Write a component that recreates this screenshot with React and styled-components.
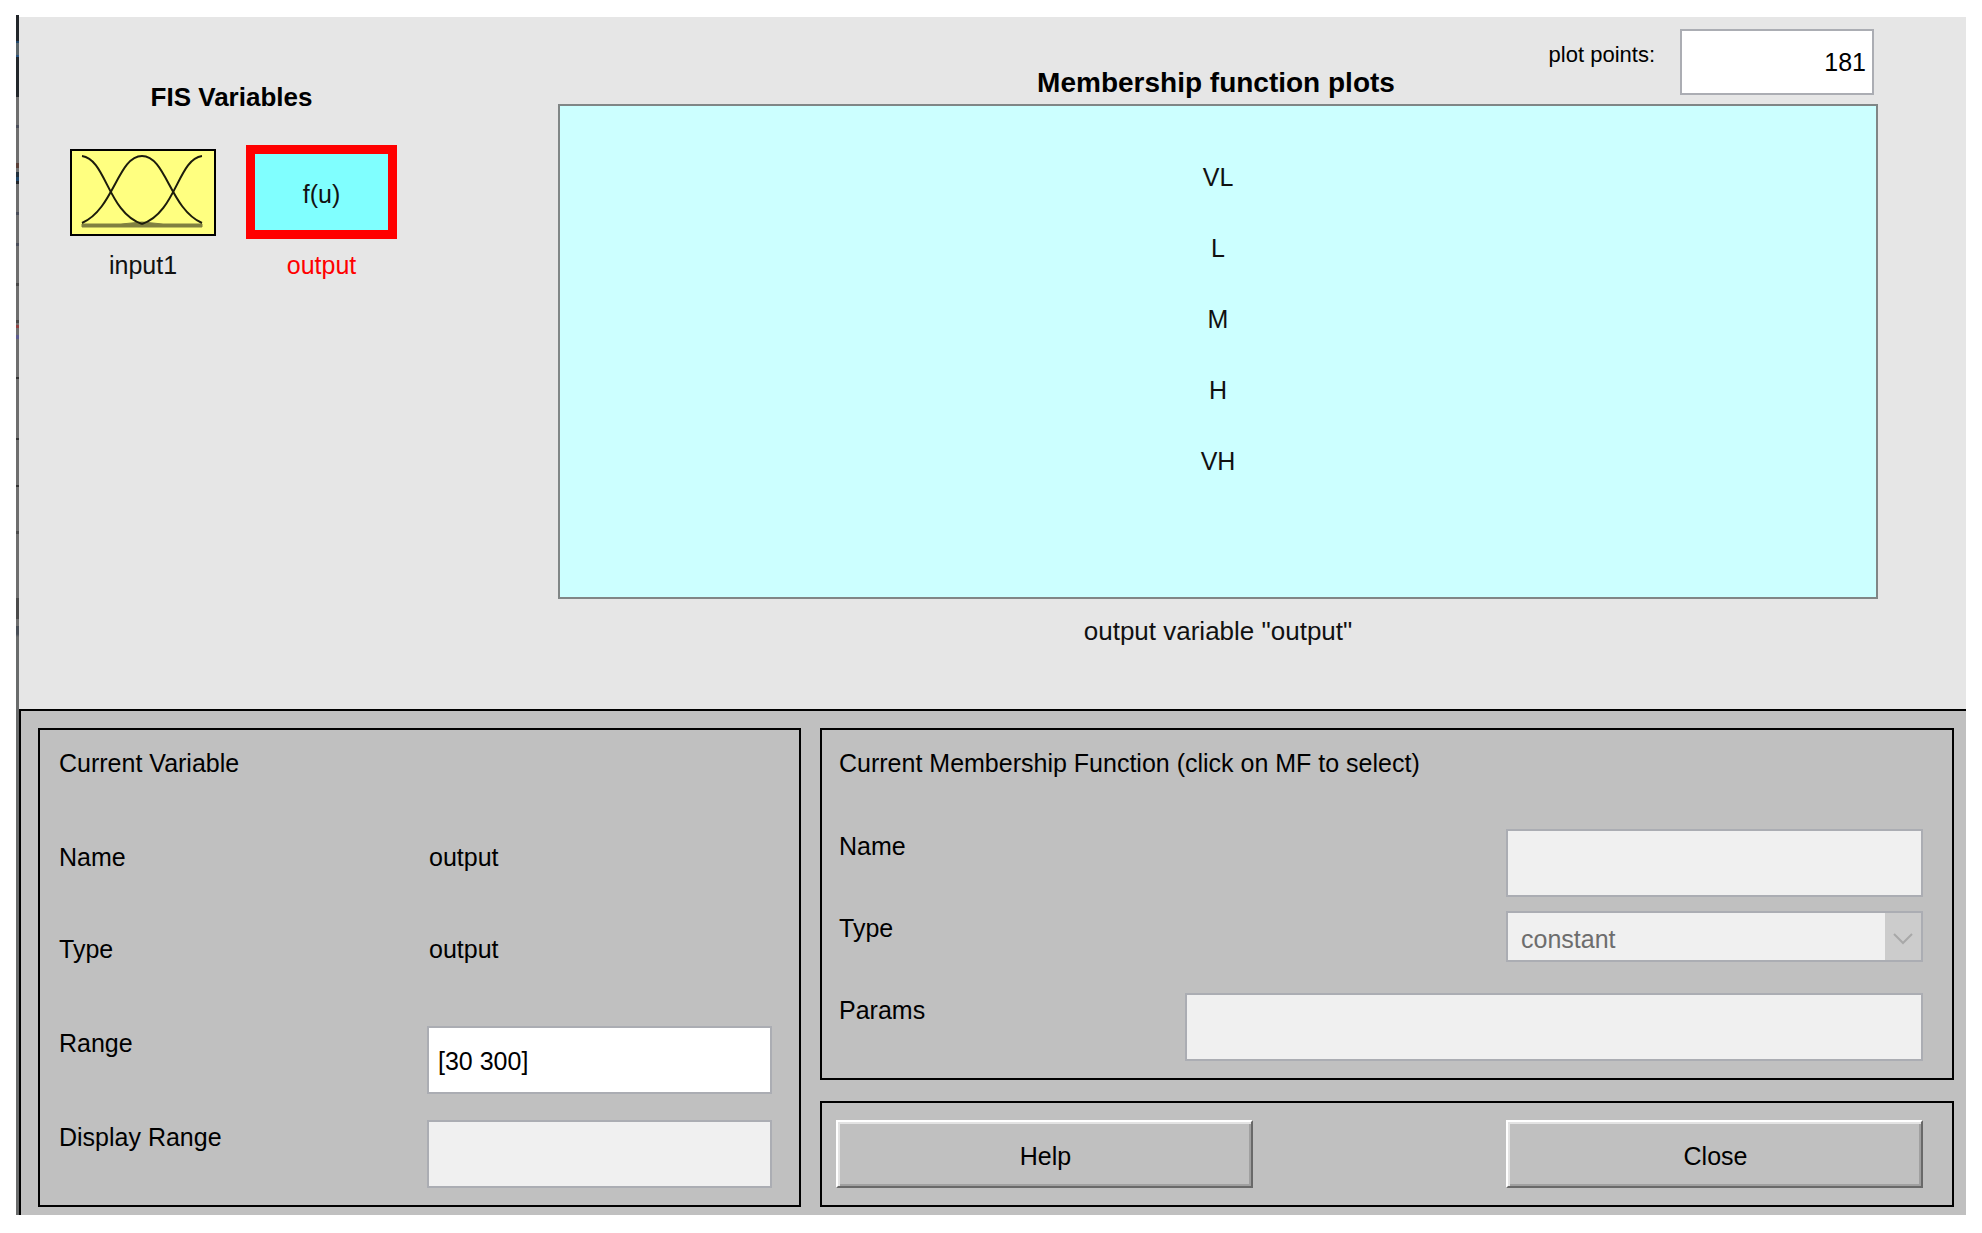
import React, { useState } from "react";
import styled, { createGlobalStyle } from "styled-components";

const GlobalStyle = createGlobalStyle`
  *, *::before, *::after { box-sizing: border-box; }
  body {
    margin: 0;
    background: #fff;
    color: #000;
    font: 25px/30px "Liberation Sans", Arial, sans-serif;
  }
  button, input, select { font: inherit; color: inherit; }
`;

/* Window */

const Page = styled.main`
  display: flex;
  padding: 15px 16px 18px;
`;

const DesktopEdge = styled.div`
  flex: none;
  width: 3px;
  background: linear-gradient(
    #22262a 0 26px, #1f4568 26px 28px, #5a6468 28px 40px, #2a5580 40px 42px,
    #22262a 42px 82px, #6e6e6e 82px 110px, #4a4e5a 110px 113px,
    #6e6e6e 113px 148px, #5a4038 148px 153px, #6e6e6e 153px 157px,
    #22303c 157px 162px, #1f4568 162px 166px, #22262a 166px 169px,
    #6e6e6e 169px 197px, #4a4e5a 197px 200px, #6e6e6e 200px 228px,
    #4a4e5a 228px 231px, #6e6e6e 231px 268px, #484848 268px 271px,
    #6e6e6e 271px 305px, #484848 305px 308px, #6e6e6e 308px 310px,
    #904040 310px 313px, #6e6e6e 313px 320px, #5c5c90 320px 324px,
    #6e6e6e 324px 362px, #333 362px 364px, #6e6e6e 364px 423px,
    #333 423px 425px, #6e6e6e 425px 470px, #333 470px 472px,
    #6e6e6e 472px 516px, #4c4c4c 516px 519px, #6e6e6e 519px 583px,
    #4a4a4a 583px 604px, #6e6e6e 604px 611px, #484e56 611px 619px,
    #696b6b 622px
  );
`;

const Editor = styled.div`
  flex: 1;
  min-width: 0;
  margin-top: 2px;
`;

/* Upper area: variables and plot */

const Overview = styled.section`
  display: grid;
  grid-template-columns: 539fr 1320fr 88fr;
  padding-bottom: 63px;
  background: #e6e6e6;
`;

const Variables = styled.div`
  justify-self: start;
  padding: 65px 0 0 51px;
`;

const VariablesTitle = styled.h2`
  margin: 0 0 33px;
  padding-right: 4px;
  font-size: 26px;
  line-height: 30px;
  text-align: center;
`;

const VariableList = styled.div`
  display: flex;
  align-items: flex-end;
  gap: 30px;
`;

const VariableButton = styled.button`
  display: flex;
  flex-direction: column;
  align-items: center;
  gap: ${(p) => (p.$selected ? 11 : 14)}px;
  padding: 0;
  border: 0;
  background: none;
  color: ${(p) => (p.$selected ? "#f00" : "#111")};
`;

const VariableBox = styled.span`
  display: flex;
  align-items: center;
  justify-content: center;
  width: ${(p) => (p.$selected ? 151 : 146)}px;
  height: ${(p) => (p.$selected ? 94 : 87)}px;
  padding-top: ${(p) => (p.$selected ? 4 : 0)}px;
  border: ${(p) => (p.$selected ? "9px solid #f00" : "2px solid #000")};
  background: ${(p) => p.$fill};
  color: #111;
`;

const Plot = styled.div`
  min-width: 0;
`;

const PlotHeader = styled.header`
  display: grid;
  grid-template-columns: 1fr auto 1fr;
  padding: 12px 4px 9px 0;
`;

const PlotTitle = styled.h1`
  grid-column: 2;
  align-self: end;
  margin: 0;
  font-size: 28px;
  line-height: 24px;
`;

const PlotPoints = styled.div`
  display: flex;
  justify-content: flex-end;
  gap: 25px;
`;

const PlotPointsLabel = styled.label`
  padding-top: 11px;
  font-size: 22px;
  white-space: nowrap;
`;

const Functions = styled.ul`
  display: flex;
  flex-direction: column;
  align-items: center;
  gap: 41px;
  margin: 0;
  padding: 56px 0 121px;
  border: 2px solid #808686;
  background: #ccffff;
  color: #111;
  list-style: none;
`;

const Caption = styled.p`
  margin: 17px 0 0;
  font-size: 26px;
  line-height: 30px;
  text-align: center;
  color: #111;
`;

/* Lower area: forms */

const Details = styled.section`
  display: grid;
  grid-template-columns: 763fr 1134fr;
  gap: 19px;
  padding: 17px 12px 8px 17px;
  border: solid #000;
  border-width: 2px 0 0 2px;
  background: #c0c0c0;
`;

const Side = styled.div`
  display: flex;
  flex-direction: column;
  gap: 21px;
`;

const panelPadding = {
  variable: "18px 27px 17px 19px",
  membership: "18px 29px 17px 17px",
  actions: "17px 29px 17px 14px",
};

const Panel = styled.section`
  padding: ${(p) => panelPadding[p.$kind]};
  border: 2px solid #000;
`;

const PanelTitle = styled.h3`
  margin: 0 0 ${(p) => p.$space}px;
  font-size: 25px;
  font-weight: 400;
  line-height: 30px;
`;

const Row = styled.div`
  display: grid;
  grid-template-columns: ${(p) => p.$columns};
  height: ${(p) => p.$height}px;
`;

const RowLabel = styled.label`
  padding-top: 2px;
`;

const RowValue = styled.output`
  padding: 2px;
`;

const Field = styled.input`
  width: 100%;
  height: 68px;
  padding: 2px 9px 0;
  border: 2px solid #abadb3;
  border-radius: 0;
  background: #fff;

  &:disabled { background: #f0f0f0; }
`;

const PointsField = styled(Field)`
  width: 194px;
  height: 66px;
  padding: 0 6px;
  text-align: right;
`;

const SelectFrame = styled.div`
  display: grid;
  grid-template-columns: 1fr 36px;
  height: 51px;
  border: 2px solid #abadb3;
  background: #f0f0f0;
`;

const Select = styled.select`
  grid-area: 1 / 1 / 2 / 3;
  height: 47px;
  padding: 4px 13px 0;
  border: 0;
  background: none;
  appearance: none;

  &:disabled { color: #6d6d6d; opacity: 1; }
`;

const Arrow = styled.span`
  grid-area: 1 / 2;
  display: flex;
  align-items: center;
  justify-content: center;
  padding-top: 4px;
  background: #cccccc;
  pointer-events: none;
`;

const Actions = styled.div`
  display: flex;
  justify-content: space-between;
  gap: 20px;
`;

const ActionButton = styled.button`
  width: 417px;
  height: 68px;
  padding: 4px 0 0 2px;
  border: 2px solid;
  border-color: #fff #696969 #696969 #fff;
  border-radius: 0;
  background: #c0c0c0;
  box-shadow: inset 2px 2px #e3e3e3, inset -2px -2px #a0a0a0;
`;

const variableColumns = "368fr 345fr";

export default function App() {
  const [range, setRange] = useState("[30 300]");
  const [points, setPoints] = useState("181");

  return (
    <Page>
      <GlobalStyle />
      <DesktopEdge />
      <Editor>
        <Overview>
          <Variables>
            <VariablesTitle>FIS Variables</VariablesTitle>
            <VariableList>
              <VariableButton type="button">
                <VariableBox $fill="#ffff80">
                  <svg width="142" height="83" viewBox="0 0 142 83" fill="none" stroke="#1c1c0c" strokeWidth="2">
                    <path d="M10 73H49L70 71L91 73H130V76H10Z" fill="#808040" stroke="#808040" strokeWidth="1" />
                    <path d="M10 5C34 8 36 62 70 73" />
                    <path d="M10 72C42 58 46 5 70 5S98 58 130 72" />
                    <path d="M130 5C106 8 104 62 70 73" />
                  </svg>
                </VariableBox>
                input1
              </VariableButton>
              <VariableButton type="button" $selected>
                <VariableBox $fill="#80ffff" $selected>f(u)</VariableBox>
                output
              </VariableButton>
            </VariableList>
          </Variables>

          <Plot>
            <PlotHeader>
              <PlotTitle>Membership function plots</PlotTitle>
              <PlotPoints>
                <PlotPointsLabel htmlFor="points">plot points:</PlotPointsLabel>
                <PointsField id="points" value={points} onChange={(e) => setPoints(e.target.value)} />
              </PlotPoints>
            </PlotHeader>
            <Functions>
              {["VL", "L", "M", "H", "VH"].map((name) => (
                <li key={name}>{name}</li>
              ))}
            </Functions>
            <Caption>output variable "output"</Caption>
          </Plot>
        </Overview>

        <Details>
          <Panel $kind="variable">
            <PanelTitle $space={62}>Current Variable</PanelTitle>
            <Row $columns={variableColumns} $height={92}>
              <RowLabel htmlFor="var-name">Name</RowLabel>
              <RowValue id="var-name">output</RowValue>
            </Row>
            <Row $columns={variableColumns} $height={94}>
              <RowLabel htmlFor="var-type">Type</RowLabel>
              <RowValue id="var-type">output</RowValue>
            </Row>
            <Row $columns={variableColumns} $height={94}>
              <RowLabel htmlFor="range">Range</RowLabel>
              <Field id="range" value={range} onChange={(e) => setRange(e.target.value)} />
            </Row>
            <Row $columns={variableColumns} $height={68}>
              <RowLabel htmlFor="display-range">Display Range</RowLabel>
              <Field id="display-range" disabled />
            </Row>
          </Panel>

          <Side>
            <Panel $kind="membership">
              <PanelTitle $space={51}>Current Membership Function (click on MF to select)</PanelTitle>
              <Row $columns="667fr 417fr" $height={82}>
                <RowLabel htmlFor="mf-name">Name</RowLabel>
                <Field id="mf-name" disabled />
              </Row>
              <Row $columns="667fr 417fr" $height={82}>
                <RowLabel htmlFor="mf-type">Type</RowLabel>
                <SelectFrame>
                  <Arrow>
                    <svg width="20" height="14" viewBox="0 0 20 14" fill="none" stroke="#a8a8a8" strokeWidth="2">
                      <path d="M1 2L10 11L19 2" />
                    </svg>
                  </Arrow>
                  <Select id="mf-type" disabled defaultValue="constant">
                    <option>constant</option>
                    <option>linear</option>
                  </Select>
                </SelectFrame>
              </Row>
              <Row $columns="346fr 738fr" $height={68}>
                <RowLabel htmlFor="mf-params">Params</RowLabel>
                <Field id="mf-params" disabled />
              </Row>
            </Panel>

            <Panel $kind="actions">
              <Actions>
                <ActionButton type="button">Help</ActionButton>
                <ActionButton type="button">Close</ActionButton>
              </Actions>
            </Panel>
          </Side>
        </Details>
      </Editor>
    </Page>
  );
}
